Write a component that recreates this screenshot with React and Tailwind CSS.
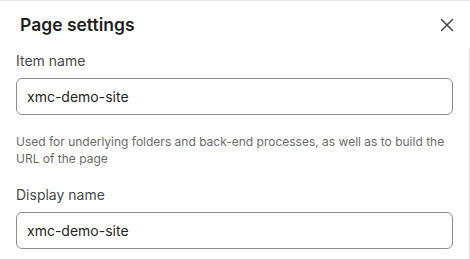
import React from "react";

const Field = ({ label, value }) => (
  <div className="flex flex-col">
    <label className="text-[14px] leading-[20px] text-[#4a4a4a]">{label}</label>
    <input
      readOnly
      value={value}
      className="mt-[7px] h-[37px] w-full rounded-[6px] border border-[#8c8c8c] bg-white px-[10px] text-[14px] text-[#1f1f1f] outline-none"
    />
  </div>
);

const CloseIcon = () => (
  <svg width="14" height="14" viewBox="0 0 14 14" fill="none">
    <path d="M1.5 1.5L12.5 12.5M12.5 1.5L1.5 12.5" stroke="#444" strokeWidth="1.5" strokeLinecap="round" />
  </svg>
);

export default function App() {
  return (
    <div
      className="w-[470px] h-[259px] overflow-hidden bg-white border-t border-[#e8e8e8]"
      style={{ fontFamily: "Inter, 'Noto Sans', sans-serif" }}
    >
      <div className="h-[47px] flex items-center justify-between pl-5 pr-[8px]">
        <h2 className="text-[17.5px] leading-[24px] font-semibold text-[#1f1f1f]">Page settings</h2>
        <button className="w-[30px] h-[30px] flex items-center justify-center">
          <CloseIcon />
        </button>
      </div>
      <div className="h-full border-r border-[#e5e5e5] pl-4 pr-[16px] pt-[3px]">
        <Field label="Item name" value="xmc-demo-site" />
        <p className="mt-[18px] text-[12px] leading-[17px] text-[#6b6b6b]">
          Used for underlying folders and back-end processes, as well as to build the URL of the page
        </p>
        <div className="mt-[18px]">
          <Field label="Display name" value="xmc-demo-site" />
        </div>
      </div>
    </div>
  );
}
